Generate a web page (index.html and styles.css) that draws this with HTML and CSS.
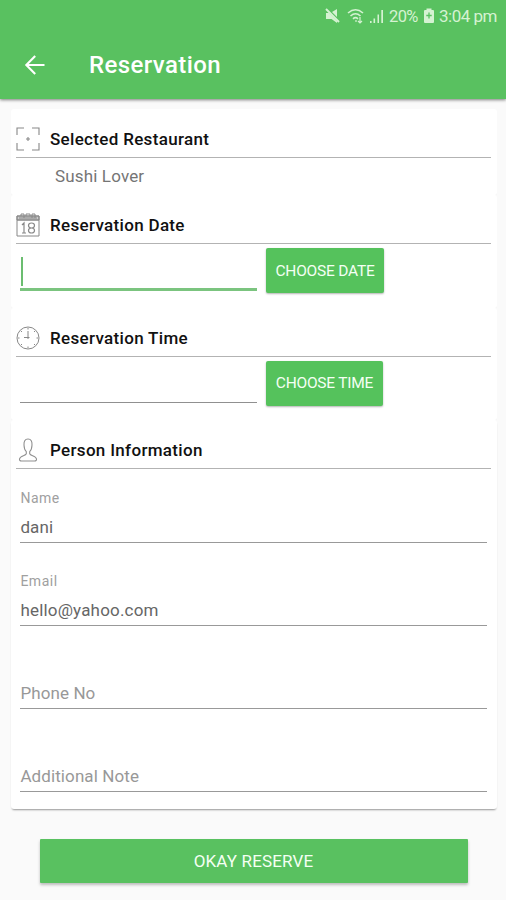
FILE: index.html
```html
<!DOCTYPE html>
<html lang="en">
<head>
<meta charset="utf-8">
<title>Reservation</title>
<link rel="stylesheet" href="styles.css">
</head>
<body>
<header class="appbar">
  <div class="status">
    <svg class="mute" width="16" height="16" viewBox="0 0 16 16"><path fill="currentColor" d="M1 5h3l8 8v2l-5.500-4H1zM7 4l5-3v8z"/><path stroke="currentColor" stroke-width="2" d="M1 1l13 13"/></svg>
    <svg class="wifi" width="18" height="16" viewBox="0 0 18 16" fill="none" stroke="currentColor" stroke-width="1.6"><path d="M1 5q7.500-6.500 15 0M3.500 8q5-4.500 10 0M6 10.800q2.500-2.200 5 0"/><path stroke-width="1.200" d="M9 12v2M13 9v6M11 13l2 2 2-2"/></svg>
    <svg class="signal" width="15" height="16" viewBox="0 0 15 16" fill="currentColor"><path d="M1 13h1.600v2H1zM4.500 10.500h1.600V15H4.500zM8.500 6.500H10V15H8.500zM12.300 2H14v13h-1.700z"/></svg>
    <span class="percent">20%</span>
    <svg class="battery" width="12" height="16" viewBox="0 0 12 16"><path fill="currentColor" d="M3.500 2V.5h5V2H10q1 0 1 1v11q0 1-1 1H2q-1 0-1-1V3q0-1 1-1z"/><path stroke="#59c160" stroke-width="1.300" d="M6 4.500v6M3.300 7.500h5.400"/></svg>
    <span class="clock">3:04 pm</span>
  </div>
  <div class="toolbar">
    <svg width="22" height="22" viewBox="0 0 22 22" fill="none" stroke="#fff" stroke-width="2.100"><path d="M20.500 11H2.500M11.200 2L2.300 11l8.900 9"/></svg>
    <h1>Reservation</h1>
  </div>
</header>
<main>
  <section class="card restaurant">
    <div class="head">
      <svg width="24" height="24" viewBox="0 0 24 24" fill="none" stroke="#888" stroke-width="1.100"><path d="M1 8V1h7M16 1h7v7M23 16v7h-7M8 23H1v-7M12 10v4M10 12h4"/></svg>
      <h2>Selected Restaurant</h2>
    </div>
    <p>Sushi Lover</p>
  </section>
  <section class="card date">
    <div class="head">
      <svg width="24" height="24" viewBox="0 0 24 24" fill="none" stroke="#888"><path fill="#ccc" d="M1 3h22v4H1z"/><path d="M1 3h22v20H1zM1 7h22M3 5h18M5 3V1h3v4M16 5V1h3v4M10 3V1h4v2"/><path stroke-width="1.200" d="M6 12l2-2v10M6 20h4M15.500 10q-3 0-3 2.500t3 2.500 3-2.500-3-2.500zM15.500 15q-3 0-3 2.500t3 2.500 3-2.500-3-2.500z"/></svg>
      <h2>Reservation Date</h2>
    </div>
    <div class="picker"><div class="input active"><i></i></div><button>CHOOSE DATE</button></div>
  </section>
  <section class="card time">
    <div class="head">
      <svg width="24" height="24" viewBox="0 0 24 24" fill="none" stroke="#888"><circle cx="12" cy="12" r="11"/><path d="M12 5v8M8 11.500h5.500M12 2v1.500M12 20.500V22M2 12h1.500M20.500 12H22M5 5l1 1M18 18l1 1M5 19l1-1M18 6l1-1"/></svg>
      <h2>Reservation Time</h2>
    </div>
    <div class="picker"><div class="input"></div><button class="short">CHOOSE TIME</button></div>
  </section>
  <section class="card person">
    <div class="head">
      <svg width="24" height="24" viewBox="0 0 24 24" fill="none" stroke="#909090" stroke-width="1.100"><path d="M12 1C8.800 1 7.800 3.500 8 7c.1 3 .8 5.300 2.300 6.700v2C9.500 18 4 17.500 3.500 21q-.2 2 2 2h13q2.200 0 2-2c-.5-3.500-6-3-6.800-5.300v-2C15.200 12.300 15.900 10 16 7c.2-3.500-.8-6-4-6z"/></svg>
      <h2>Person Information</h2>
    </div>
    <div class="field"><label class="name">Name</label><span>dani</span></div>
    <div class="field"><label>Email</label><span class="email">hello@yahoo.com</span></div>
    <div class="field"><span class="hint">Phone No</span></div>
    <div class="field"><span class="hint">Additional Note</span></div>
  </section>
  <button class="reserve">OKAY RESERVE</button>
</main>
</body>
</html>
```
FILE: styles.css
```css
* { box-sizing: border-box; }
body { margin: 0; height: 900px; overflow: hidden; background: #fafafa; font-family: Roboto, sans-serif; }
svg { display: block; flex: none; }
h1, h2, p { margin: 0; white-space: nowrap; }
.appbar { position: relative; height: 99px; background: #59c160; color: #fff; box-shadow: 0 1px 3px rgba(0,0,0,.5); }
.status { height: 32px; padding: 0 9px 0 0; display: flex; align-items: center; justify-content: flex-end; color: #d5f2d2; font-size: 17px; }
.wifi { margin-left: 6px; }
.signal { margin-left: 4px; }
.percent { width: 30px; margin-left: 5px; font-size: 16.5px; letter-spacing: -.6px; }
.battery { margin-left: 4px; }
.clock { width: 58px; margin-left: 4px; white-space: nowrap; letter-spacing: -.5px; }
.toolbar { height: 66px; padding-left: 24px; display: flex; align-items: center; gap: 43px; }
h1 { font-size: 24px; font-weight: 500; letter-spacing: .4px; line-height: 30px; }
main { padding: 10px 9px 0 11px; display: flex; flex-direction: column; }
.card { background: #fff; border-radius: 3px; padding: 0 6px 0 5px; box-shadow: 0 1px 1px rgba(0,0,0,.02); }
.restaurant { height: 86px; }
.date { height: 112.5px; }
.time { height: 112.5px; }
.person { height: 389px; box-shadow: 0 2px 2px -1px rgba(0,0,0,.4); }
.head { height: 49px; padding: 12px 0 0; border-bottom: 1px solid #b3b3b3; display: flex; align-items: center; gap: 10px; }
h2 { font-size: 17px; font-weight: 500; color: #111; letter-spacing: .32px; line-height: 24px; }
.restaurant h2 { margin-top: -1px; }
p { padding: 6px 0 0 39px; font-size: 17px; line-height: 24px; color: #757575; letter-spacing: .15px; }
.picker { display: flex; align-items: flex-start; padding: 4px 0 0 4px; gap: 9px; }
.input { width: 237px; height: 42px; border-bottom: 1px solid #909090; }
.input.active { height: 43px; border-bottom: 3px solid #7bc47f; padding: 9px 0 0 1px; }
.input i { display: block; width: 2px; height: 29px; background: #6bbd70; }
button { border: 0; padding: 0; color: #f4fff3; background: #55c25c; font: 15.5px Roboto, sans-serif; border-radius: 2px; box-shadow: 0 1px 2px rgba(0,0,0,.3); white-space: nowrap; }
.picker button { width: 118px; height: 45px; letter-spacing: -.22px; }
.picker .short { width: 117px; }
.field { height: 83px; margin: 0 4px; border-bottom: 1px solid #999; display: flex; flex-direction: column; justify-content: flex-end; padding: 0 0 3px .4px; color: #666; font-size: 17px; line-height: 24px; letter-spacing: .1px; }
.head + .field { height: 74px; }
.field label { font-size: 14px; line-height: 20px; margin-bottom: 7px; color: #a0a0a0; letter-spacing: .5px; }
.email { letter-spacing: .18px; }
.hint { color: #989898; }
.reserve { width: 428px; height: 44px; margin: 30px 0 0 28.500px; font-size: 17px; letter-spacing: .15px; border-radius: 1px; background: #59c160; box-shadow: 0 2px 3px rgba(0,0,0,.25); }
```
